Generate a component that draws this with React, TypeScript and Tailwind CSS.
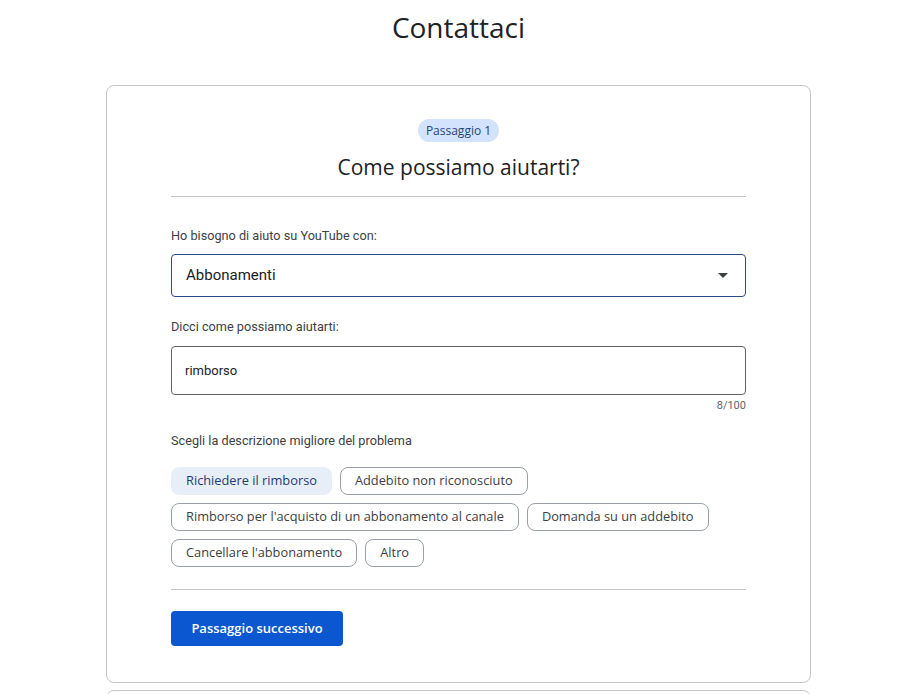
const chips = [
  ["Richiedere il rimborso", true],
  ["Addebito non riconosciuto", false],
  ["Rimborso per l'acquisto di un abbonamento al canale", false],
  ["Domanda su un addebito", false],
  ["Cancellare l'abbonamento", false],
  ["Altro", false],
] as const;

export default function App() {
  return (
    <div className="h-[694px] overflow-hidden bg-white font-['Roboto',sans-serif] text-[#202124]">
      <div className="w-[917px]">
        <h1 className="pt-[9px] text-center font-['Open_Sans',sans-serif] text-[28px] leading-[36px] text-[#202124]">
          Contattaci
        </h1>

        <div className="mx-auto mt-[40px] w-[705px] rounded-lg border border-[#c4c7c5] px-[64px] pt-[33px] pb-[36px]">
          <div className="flex flex-col items-center">
            <span className="rounded-full bg-[#d3e3fd] px-[8px] py-[3px] font-['Open_Sans',sans-serif] text-[12px] leading-[17px] text-[#274377]">
              Passaggio 1
            </span>
            <h2 className="mt-[12px] font-['Open_Sans',sans-serif] text-[21px] leading-[26px] text-[#202124]">
              Come possiamo aiutarti?
            </h2>
          </div>
          <div className="mt-[16px] h-px bg-[#c4c7c5]" />

          <label className="mt-[30px] block text-[12.7px] leading-[18px] text-[#3c4043]">
            Ho bisogno di aiuto su YouTube con:
          </label>
          <div className="mt-[9px] flex h-[43px] items-center justify-between rounded border border-[#2a4c8a] px-[14px]">
            <span className="text-[15px] text-[#202124]">Abbonamenti</span>
            <svg width="10" height="5" viewBox="0 0 10 5" className="mr-[3px]">
              <path d="M0 0 L10 0 L5 5 Z" fill="#3c4043" />
            </svg>
          </div>

          <label className="mt-[21px] block text-[12.7px] leading-[18px] text-[#3c4043]">
            Dicci come possiamo aiutarti:
          </label>
          <div className="mt-[10px] flex h-[49px] items-center rounded border border-[#5f6368] px-[13px]">
            <span className="text-[13px] text-[#202124]">rimborso</span>
          </div>
          <div className="mt-[4px] text-right text-[11px] leading-[14px] text-[#5f6368]">8/100</div>

          <p className="mt-[19px] text-[12.7px] leading-[18px] text-[#3c4043]">
            Scegli la descrizione migliore del problema
          </p>

          <div className="mt-[17px] flex flex-wrap gap-[8px]">
            {chips.map(([label, active]) => (
              <span
                key={label}
                className={
                  active
                    ? "flex h-[28px] items-center rounded-lg border border-[#e8eef8] bg-[#e8eef8] px-[14px] font-['Open_Sans',sans-serif] text-[12.8px] text-[#1f3a72]"
                    : "flex h-[28px] items-center rounded-lg border border-[#9aa0a6] bg-white px-[14px] font-['Open_Sans',sans-serif] text-[12.8px] text-[#3c4043]"
                }
              >
                {label}
              </span>
            ))}
          </div>

          <div className="mt-[22px] h-px bg-[#c4c7c5]" />

          <button className="mt-[21px] flex h-[35px] w-[172px] items-center justify-center rounded bg-[#0b57d0] font-['Open_Sans',sans-serif] text-[13px] font-semibold text-white">
            Passaggio successivo
          </button>
        </div>

        <div className="mx-auto mt-[7px] h-[40px] w-[705px] rounded-t-lg border border-[#c4c7c5]" />
      </div>
    </div>
  );
}
